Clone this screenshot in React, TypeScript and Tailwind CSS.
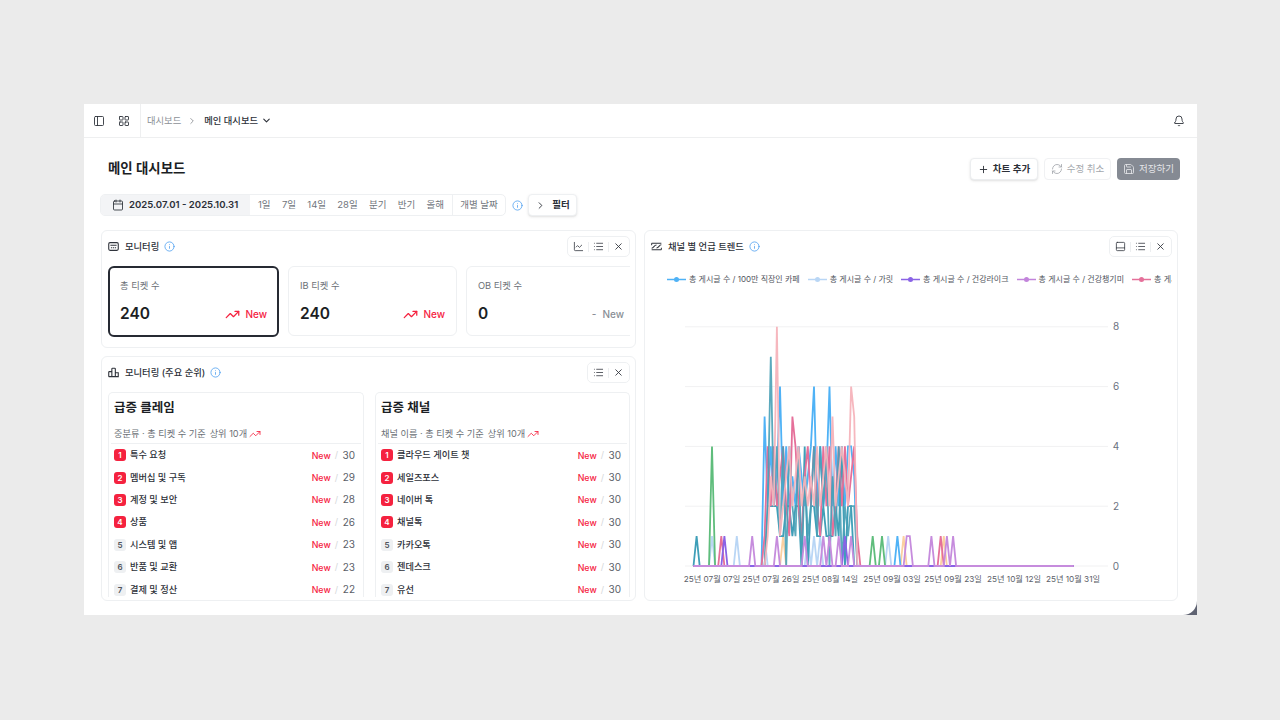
import React from 'react';
import { PanelLeft, LayoutGrid, ChevronRight, ChevronDown, Bell, Plus, RefreshCw, Save, Calendar, Info, ChartLine, List, X, TrendingUp, PanelBottom } from 'lucide-react';

const X0 = 693.5;
const STEP = 3.09;
const xOf = (i: number) => X0 + STEP * i;
const yOf = (v: number) => 566 - v * 29.9;

function build(dense: number[] | null, spikes: Record<number, number>): string {
  const pts: string[] = [];
  for (let i = 0; i <= 123; i++) {
    let v = spikes[i] ?? 0;
    if (dense && i >= 22 && i < 22 + dense.length) v = dense[i - 22];
    pts.push(`${xOf(i).toFixed(1)},${yOf(v).toFixed(1)}`);
  }
  return pts.join(' ');
}

const series: { color: string; op: number; dense: number[] | null; spikes: Record<number, number> }[] = [
  { color: '#fbd0a0', op: 1, dense: null, spikes: { 29: 1, 68: 1, 81: 1 } },
  { color: '#b9d6f5', op: 1, dense: null, spikes: { 6: 1, 14: 1, 23: 1, 37: 1, 39: 1, 41: 1, 63: 1 } },
  { color: '#4fb2f6', op: 1, dense: [0, 5, 2, 4, 2, 3, 6, 2, 4, 2, 3, 2, 4, 3, 2, 3, 4, 6, 2, 4, 2, 3, 6, 2, 4, 2, 4, 2, 4, 4, 3, 0, 0], spikes: { 66: 1 } },
  { color: '#5fbd7c', op: 1, dense: null, spikes: { 6: 4, 58: 1, 61: 1 } },
  { color: '#3f9fb8', op: 1, dense: [0, 0, 2, 2, 2, 2, 1, 1, 2, 2, 1, 2, 2, 0, 4, 0, 2, 2, 1, 1, 2, 1, 1, 1, 2, 1, 4, 0, 2, 2, 0, 0, 0], spikes: { 1: 1 } },
  { color: '#e5709a', op: 1, dense: [0, 1, 4, 2, 4, 2, 3, 4, 2, 1, 5, 4, 2, 1, 3, 4, 2, 4, 2, 1, 4, 2, 4, 1, 2, 4, 2, 4, 2, 3, 4, 1, 0], spikes: { 9: 1, 80: 1 } },
  { color: '#48a0b6', op: 0.9, dense: [0, 0, 2, 7, 2, 4, 1, 4, 0, 4, 2, 1, 4, 0, 3, 1, 2, 4, 1, 4, 2, 4, 0, 3, 1, 4, 0, 2, 1, 2, 2, 0, 0], spikes: {} },
  { color: '#f6b3ba', op: 0.95, dense: [0, 0, 1, 3, 2, 8, 1, 2, 3, 4, 2, 3, 4, 2, 3, 2, 3, 2, 4, 2, 3, 4, 2, 5, 2, 3, 4, 3, 2, 6, 5, 0, 0], spikes: {} },
  { color: '#8a63e6', op: 1, dense: null, spikes: { 10: 1, 49: 1 } },
  { color: '#c68cdd', op: 1, dense: null, spikes: { 19: 1, 27: 1, 36: 1, 42: 1, 44: 1, 47: 1, 51: 1, 69: 1, 70: 1, 77: 1, 82: 1, 84: 1 } },
];

const legend = [
  { c: '#4fb2f6', t: '총 게시글 수 / 100만 직장인 카페' },
  { c: '#b9d6f5', t: '총 게시글 수 / 가릿' },
  { c: '#8a63e6', t: '총 게시글 수 / 건강라이크' },
  { c: '#c284db', t: '총 게시글 수 / 건강챙기미' },
  { c: '#e5709a', t: '총 게시글 수' },
];

const xLabels: [number, string][] = [
  [712, '25년 07월 07일'],
  [771, '25년 07월 26일'],
  [830, '25년 08월 14일'],
  [892, '25년 09월 03일'],
  [953, '25년 09월 23일'],
  [1014, '25년 10월 12일'],
  [1073, '25년 10월 31일'],
];

function Chart() {
  return (
    <svg width={532} height={296} className="block shrink-0">
      <g transform="translate(-645,-304)">
        {[0, 2, 4, 6, 8].map((v) => (
          <g key={v}>
            <line x1={685} x2={1108} y1={yOf(v)} y2={yOf(v)} stroke="#f1f1f2" strokeWidth={1} />
            <text x={1116} y={yOf(v) + 3.5} fontSize={10} fill="#6b7280" textAnchor="middle">{v}</text>
          </g>
        ))}
        {series.map((s, i) => (
          <polyline key={i} points={build(s.dense, s.spikes)} fill="none" stroke={s.color} strokeOpacity={s.op} strokeWidth={1.8} strokeLinejoin="miter" />
        ))}
        {xLabels.map(([x, t]) => (
          <text key={t} x={x} y={582} fontSize={8.2} fill="#5b6068" textAnchor="middle">{t}</text>
        ))}
      </g>
    </svg>
  );
}

function IconMonitor() {
  return (
    <svg width="11" height="11" viewBox="0 0 12 12" fill="none" stroke="#30343c" strokeWidth="1.2" className="shrink-0">
      <rect x="0.8" y="1.8" width="10.4" height="8.4" rx="1.4" />
      <path d="M2.6 4.6h6.8M3.2 7.4h1.4M5.4 7.4h1.2M7.4 7.4h1.4" />
    </svg>
  );
}
function IconRank() {
  return (
    <svg width="11" height="11" viewBox="0 0 12 12" fill="none" stroke="#30343c" strokeWidth="1.2" className="shrink-0">
      <path d="M0.8 10.5h10.4V6.2H8V10.5M8 8V2.2a.8.8 0 0 0-.8-.8H5a.8.8 0 0 0-.8.8V10.5M4.2 5H1.5a.7.7 0 0 0-.7.7v4.8" />
    </svg>
  );
}
function IconTrend() {
  return (
    <svg width="11" height="11" viewBox="0 0 12 12" fill="none" stroke="#30343c" strokeWidth="1.1" className="shrink-0">
      <path d="M0.7 2.4h10.6M0.7 9.6h10.6M0.7 2.4v2.2M11.3 7.4v2.2M0.7 7.8c2.6 0 2.4-3.4 5.3-3.4M6 7.6c2.8 0 2.6-3.4 5.3-3.4" />
    </svg>
  );
}

function Sep() {
  return <span className="w-px h-[10px] bg-[#eceef0]" />;
}

function ToolGroup({ first }: { first?: 'line' | 'panel' }) {
  return (
    <div className="flex items-center h-[21px] rounded-[5px] border border-[#eef0f2] bg-white px-[4px] gap-[3px]">
      {first === 'line' && <ChartLine size={11} strokeWidth={1.7} className="text-[#30343c] mx-[1px]" />}
      {first === 'panel' && <PanelBottom size={11} strokeWidth={1.7} className="text-[#30343c] mx-[1px]" />}
      {first && <Sep />}
      <List size={11} strokeWidth={1.7} className="text-[#30343c] mx-[1px]" />
      <Sep />
      <X size={11} strokeWidth={1.9} className="text-[#30343c] mx-[1px]" />
    </div>
  );
}

function InfoIcon() {
  return <Info size={11} strokeWidth={1.7} className="text-[#4a9df0] shrink-0" />;
}

function Kpi({ label, value, active, flat, w }: { label: string; value: string; active?: boolean; flat?: boolean; w: string }) {
  return (
    <div className={`${w} shrink-0 rounded-[6px] bg-white flex flex-col ${active ? 'h-[71px] border-2 border-[#262a33] pt-[11px] pl-[10px] pr-[10px]' : 'h-[70px] border border-[#eef0f2] pt-[12px] pl-[11px] pr-[11px]'}`}>
      <div className="text-[9.3px] leading-[14px] text-[#6b7076]">{label}</div>
      <div className="flex items-center justify-between mt-[9px]">
        <span className="text-[15.5px] leading-[24px] font-semibold text-[#1b1e24]">{value}</span>
        {flat ? (
          <span className="text-[10px] font-medium text-[#8a8f96] flex items-center gap-[6px]"><span>-</span><span>New</span></span>
        ) : (
          <span className="text-[10px] font-medium text-[#f5223f] flex items-center gap-[5px]">
            <TrendingUp size={15} strokeWidth={2} />
            <span>New</span>
          </span>
        )}
      </div>
    </div>
  );
}

function RankList({ title, sub, rows, w }: { title: string; sub: [string, string]; rows: [string, number][]; w: string }) {
  return (
    <div className={`${w} min-w-0 h-[205px] rounded-t-[5px] border border-b-0 border-[#eef0f2] overflow-hidden px-[2px]`}>
      <div className="pl-[3px] pt-[6px] text-[12.5px] leading-[18px] font-semibold text-[#1b1e24]">{title}</div>
      <div className="pl-[3px] mt-[8px] h-[19px] flex items-center text-[9.2px] text-[#6b7076] border-b border-[#eef0f2]">
        <span>{sub[0]}</span>
        <span className="ml-[4px]">{sub[1]}</span>
        <TrendingUp size={12} strokeWidth={1.7} className="text-[#f5223f] ml-[2px]" />
      </div>
      <div>
        {rows.map(([name, n], i) => (
          <div key={name} className="h-[22.4px] flex items-center pl-[3px] pr-[6px] text-[9.2px]">
            <span className={`w-[12px] h-[12px] rounded-[3px] flex items-center justify-center text-[8px] font-semibold ${i < 4 ? 'bg-[#f5223f] text-white' : 'bg-[#eef0f2] text-[#50545c]'}`}>{i + 1}</span>
            <span className="ml-[4px] flex-1 font-medium text-[#2c3038] truncate">{name}</span>
            <span className="text-[#f5223f] font-medium text-[8.8px]">New</span>
            <span className="mx-[4px] text-[#d5d7da]">/</span>
            <span className="w-[13px] text-right text-[#5b6068] text-[10px]">{n}</span>
          </div>
        ))}
      </div>
    </div>
  );
}

export default function App() {
  return (
    <div className="w-full h-[720px] bg-[#ebebeb] pt-[104px] pl-[84px] font-[Inter,'Noto_Sans_CJK_KR',sans-serif] overflow-hidden">
      <div className="relative w-[1113px] h-[511px] bg-white flex flex-col">
        <div className="h-[34px] shrink-0 flex items-center border-b border-[#eeeff0]">
          <div className="h-full w-[57px] flex items-center justify-between pl-[9px] pr-[10px] border-r border-[#eeeff0]">
            <PanelLeft size={12} strokeWidth={1.8} className="text-[#30343c]" />
            <LayoutGrid size={12} strokeWidth={1.8} className="text-[#30343c]" />
          </div>
          <div className="flex items-center pl-[6px] text-[9.3px]">
            <span className="text-[#8d9197]">대시보드</span>
            <ChevronRight size={10} strokeWidth={1.6} className="text-[#6b7076] ml-[6px] mr-[7px]" />
            <span className="font-medium text-[#2c3038]">메인 대시보드</span>
            <ChevronDown size={11} strokeWidth={2.4} className="text-[#2c3038] ml-[3px]" />
          </div>
          <Bell size={12} strokeWidth={1.8} className="text-[#30343c] ml-auto mr-[12px]" />
        </div>

        <div className="flex items-center justify-between mt-[20px] pl-[24px] pr-[17px] h-[22px] shrink-0">
          <div className="text-[13.4px] font-semibold text-[#1b1e24] -mt-[2px]">메인 대시보드</div>
          <div className="flex items-center gap-[6px] text-[9.5px]">
            <button className="h-[22px] w-[68px] rounded-[4px] border border-[#eceef0] shadow-sm bg-white flex items-center justify-center gap-[4px] font-semibold text-[#2c3038]">
              <Plus size={11} strokeWidth={2} />차트 추가
            </button>
            <button className="h-[22px] w-[67px] rounded-[4px] border border-[#f0f1f3] bg-white flex items-center justify-center gap-[4px] text-[#a4a8ad]">
              <RefreshCw size={12} strokeWidth={1.7} />수정 취소
            </button>
            <button className="h-[22px] w-[63px] rounded-[4px] bg-[#858a93] flex items-center justify-center gap-[4px] text-[#e4e5e8]">
              <Save size={12} strokeWidth={1.7} />저장하기
            </button>
          </div>
        </div>

        <div className="flex items-center mt-[14px] pl-[16px] h-[22px] shrink-0">
          <div className="flex items-stretch h-[22px] w-[406px] rounded-[5px] border border-[#eef0f2] overflow-hidden text-[9.5px] text-[#70757c]">
            <div className="w-[149px] bg-[#f3f4f6] flex items-center pl-[11px] gap-[5px] font-semibold text-[#2c3038] text-[9.6px]">
              <Calendar size={12} strokeWidth={1.7} />2025.07.01 - 2025.10.31
            </div>
            <div className="w-[203px] flex items-center justify-between pl-[8px] pr-[8px] border-r border-[#eef0f2]">
              <span>1일</span><span>7일</span><span>14일</span><span>28일</span><span>분기</span><span>반기</span><span>올해</span>
            </div>
            <div className="flex-1 flex items-center justify-center">개별 날짜</div>
          </div>
          <span className="ml-[6px]"><InfoIcon /></span>
          <button className="ml-[5px] h-[22px] w-[49px] rounded-[4px] border border-[#eef0f2] shadow-sm bg-white flex items-center justify-center gap-[6px] text-[9.5px] font-semibold text-[#2c3038]">
            <ChevronRight size={11} strokeWidth={2} />필터
          </button>
        </div>

        <div className="flex gap-[8px] mt-[14px] pl-[17px] pr-[19px]">
          <div className="w-[535px] shrink-0 flex flex-col gap-[8px]">
            <section className="h-[118px] rounded-[6px] border border-[#eef0f2] pl-[6px] pr-[5px]">
              <div className="flex items-center h-[21px] mt-[5px] gap-[5px]">
                <IconMonitor />
                <span className="text-[9.3px] font-medium text-[#2c3038] ml-[1px]">모니터링</span>
                <InfoIcon />
                <span className="ml-auto"><ToolGroup first="line" /></span>
              </div>
              <div className="flex items-start gap-[9px] mt-[9px] overflow-hidden">
                <Kpi label="총 티켓 수" value="240" active w="w-[171px]" />
                <Kpi label="IB 티켓 수" value="240" w="w-[169px]" />
                <Kpi label="OB 티켓 수" value="0" flat w="w-[170px]" />
              </div>
            </section>
            <section className="h-[245px] rounded-[6px] border border-[#eef0f2] pl-[6px] pr-[5px] overflow-hidden">
              <div className="flex items-center h-[21px] mt-[5px] gap-[5px]">
                <IconRank />
                <span className="text-[9.3px] font-medium text-[#2c3038] ml-[1px] mt-[1px]">모니터링 (주요 순위)</span>
                <InfoIcon />
                <span className="ml-auto"><ToolGroup /></span>
              </div>
              <div className="flex gap-[11px] mt-[9px]">
                <RankList
                  w="w-[256px]"
                  title="급증 클레임"
                  sub={['중분류 · 총 티켓 수 기준', '상위 10개']}
                  rows={[['특수 요청', 30], ['멤버십 및 구독', 29], ['계정 및 보안', 28], ['상품', 26], ['시스템 및 앱', 23], ['반품 및 교환', 23], ['결제 및 정산', 22]]}
                />
                <RankList
                  w="flex-1"
                  title="급증 채널"
                  sub={['채널 이름 · 총 티켓 수 기준', '상위 10개']}
                  rows={[['클라우드 게이트 챗', 30], ['세일즈포스', 30], ['네이버 톡', 30], ['채널톡', 30], ['카카오톡', 30], ['젠데스크', 30], ['유선', 30]]}
                />
              </div>
            </section>
          </div>

          <section className="w-[534px] h-[371px] shrink-0 rounded-[6px] border border-[#eef0f2] overflow-hidden">
            <div className="flex items-center h-[21px] mt-[5px] pl-[6px] pr-[5px] gap-[5px]">
              <IconTrend />
              <span className="text-[9.3px] font-medium text-[#2c3038] ml-[1px]">채널 별 언급 트렌드</span>
              <InfoIcon />
              <span className="ml-auto"><ToolGroup first="panel" /></span>
            </div>
            <div className="mt-[14px] ml-[22px] mr-[5px] h-[16px] flex items-center gap-[8px] overflow-hidden">
              {legend.map((l) => (
                <div key={l.t} className="flex items-center gap-[3px] shrink-0 whitespace-nowrap text-[8px] text-[#50545c]">
                  <svg width="19" height="7" className="shrink-0">
                    <line x1="0" x2="19" y1="3.5" y2="3.5" stroke={l.c} strokeWidth="1.5" />
                    <circle cx="9.5" cy="3.5" r="2.5" fill={l.c} />
                  </svg>
                  {l.t}
                </div>
              ))}
            </div>
            <div className="mt-[17px]"><Chart /></div>
          </section>
        </div>

        <div className="absolute right-0 bottom-0 w-[14px] h-[14px] bg-[#5f6372]">
          <div className="w-full h-full bg-white rounded-br-[14px]" />
        </div>
      </div>
    </div>
  );
}
